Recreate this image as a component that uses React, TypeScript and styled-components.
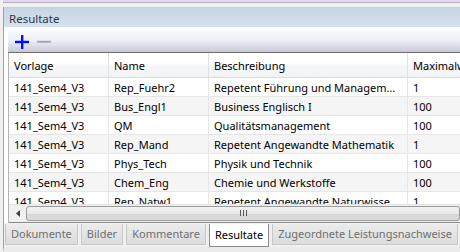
import styled, { createGlobalStyle } from "styled-components";

const GlobalStyle = createGlobalStyle`
  html, body {
    margin: 0;
    padding: 0;
    width: 460px;
    height: 252px;
    overflow: hidden;
    background: #f0f0f0;
    font-family: "Noto Sans", "Open Sans", sans-serif;
    font-size: 11px;
    color: #000;
  }
`;

const columns = [
  { title: "Vorlage", width: 100 },
  { title: "Name", width: 100 },
  { title: "Beschreibung", width: 199 },
  { title: "Maximalwert", width: 80 },
];

const rows = [
  ["141_Sem4_V3", "Rep_Fuehr2", "Repetent Führung und Management", "1"],
  ["141_Sem4_V3", "Bus_Engl1", "Business Englisch I", "100"],
  ["141_Sem4_V3", "QM", "Qualitätsmanagement", "100"],
  ["141_Sem4_V3", "Rep_Mand", "Repetent Angewandte Mathematik", "1"],
  ["141_Sem4_V3", "Phys_Tech", "Physik und Technik", "100"],
  ["141_Sem4_V3", "Chem_Eng", "Chemie und Werkstoffe", "100"],
  ["141_Sem4_V3", "Rep_Natw1", "Repetent Angewandte Naturwissenschaften", "1"],
];

const tabs = [
  "Dokumente",
  "Bilder",
  "Kommentare",
  "Resultate",
  "Zugeordnete Leistungsnachweise",
];

export default function App() {
  return (
    <>
      <GlobalStyle />
      <Page>
        <TopStrip />
        <Panel>
          <PanelHeader>Resultate</PanelHeader>
          <PanelBody>
            <Toolbar>
              <ToolButton $color="#0010f0" title="Hinzufügen">
                <svg width="16" height="16" viewBox="0 0 16 16">
                  <rect x="7" y="1" width="2.4" height="14" fill="currentColor" />
                  <rect x="1" y="6.8" width="14" height="2.4" fill="currentColor" />
                </svg>
              </ToolButton>
              <ToolButton $color="#a8a8a8" title="Entfernen">
                <svg width="16" height="16" viewBox="0 0 16 16">
                  <rect x="1" y="6.8" width="14" height="2" fill="currentColor" />
                </svg>
              </ToolButton>
            </Toolbar>
            <Grid>
              <HeaderRow>
                {columns.map((c) => (
                  <HeaderCell key={c.title} $width={c.width}>
                    {c.title}
                  </HeaderCell>
                ))}
              </HeaderRow>
              <Rows>
                {rows.map((r, i) => (
                  <Row key={i} $alt={i % 2 === 1}>
                    {r.map((v, j) => (
                      <Cell key={j} $width={columns[j].width}>
                        {v}
                      </Cell>
                    ))}
                  </Row>
                ))}
              </Rows>
              <HScroll>
                <ArrowBtn>
                  <svg width="4" height="7" viewBox="0 0 4 7">
                    <path d="M4 0 L0 3.5 L4 7 Z" fill="#404040" />
                  </svg>
                </ArrowBtn>
                <Track>
                  <Thumb>
                    <Grip />
                  </Thumb>
                </Track>
              </HScroll>
            </Grid>
          </PanelBody>
        </Panel>
        <TabBar>
          {tabs.map((t) => (
            <Tab key={t} $active={t === "Resultate"}>
              {t}
            </Tab>
          ))}
        </TabBar>
      </Page>
    </>
  );
}

const Page = styled.div`
  width: 460px;
  height: 252px;
  display: flex;
  flex-direction: column;
  overflow: hidden;
`;

const TopStrip = styled.div`
  height: 2px;
  background: #e4d8ee;
  border-bottom: 1px solid #b8b0c4;
  margin-left: 3px;
  margin-bottom: 4px;
`;

const Panel = styled.div`
  margin-left: 3px;
  border-left: 1px solid #a0a0a0;
  display: flex;
  flex-direction: column;
  height: 216px;
`;

const PanelHeader = styled.div`
  height: 20px;
  box-sizing: border-box;
  padding: 3px 0 0 5px;
  line-height: 17px;
  font-size: 11.5px;
  color: #30373f;
  background: linear-gradient(#c6d4e2, #d6e2ee);
`;

const PanelBody = styled.div`
  flex: 1;
  background: #ffffff;
  padding: 3px 0 0 4px;
  display: flex;
  flex-direction: column;
  min-height: 0;
`;

const Toolbar = styled.div`
  height: 23px;
  display: flex;
  align-items: center;
  gap: 6px;
  padding: 2px 0 0 6px;
  box-sizing: border-box;
  background: linear-gradient(#fafbfe 0%, #eef0f8 45%, #c9c9d6 100%);
  border-bottom: 1px solid #6e6e6e;
`;

const ToolButton = styled.span<{ $color: string }>`
  width: 16px;
  height: 16px;
  display: flex;
  color: ${(p) => p.$color};
`;

const Grid = styled.div`
  flex: 1;
  display: flex;
  flex-direction: column;
  border-left: 1px solid #b4b4b4;
  min-height: 0;
  overflow: hidden;
`;

const HeaderRow = styled.div`
  display: flex;
  height: 24px;
  flex-shrink: 0;
  background: linear-gradient(#ffffff 0%, #ffffff 45%, #f6f7f9 50%, #f2f3f5 100%);
  border-bottom: 1px solid #dcdcdc;
`;

const HeaderCell = styled.div<{ $width: number }>`
  flex: 0 0 ${(p) => p.$width}px;
  padding: 3px 0 0 5px;
  line-height: 20px;
  white-space: nowrap;
  overflow: hidden;
  border-right: 1px solid #e0e2e6;
  box-sizing: border-box;
`;

const Rows = styled.div`
  flex: 1;
  overflow: hidden;
  min-height: 0;
`;

const Row = styled.div<{ $alt: boolean }>`
  display: flex;
  height: 19px;
  background: ${(p) => (p.$alt ? "#f5f5f5" : "#ffffff")};
  border-bottom: 1px solid #e6e6e6;
  box-sizing: border-box;
`;

const Cell = styled.div<{ $width: number }>`
  flex: 0 0 ${(p) => p.$width}px;
  padding: 1px 6px 0 5px;
  line-height: 18px;
  white-space: nowrap;
  overflow: hidden;
  text-overflow: ellipsis;
  border-right: 1px solid #e6e6e6;
  box-sizing: border-box;
`;

const HScroll = styled.div`
  height: 17px;
  flex-shrink: 0;
  display: flex;
  background: #f0f0f0;
  border-top: 1px solid #e4e4e4;
  border-bottom: 1px solid #8a8a8a;
`;

const ArrowBtn = styled.div`
  width: 17px;
  display: flex;
  align-items: center;
  justify-content: center;
`;

const Track = styled.div`
  flex: 1;
  display: flex;
  padding: 1px 0;
`;

const Thumb = styled.div`
  flex: 1;
  border: 1px solid #9a9a9a;
  border-radius: 3px;
  background: linear-gradient(#f3f3f3 0%, #e8e8e8 50%, #d6d6d6 51%, #dcdcdc 100%);
  display: flex;
  align-items: center;
  justify-content: center;
`;

const Grip = styled.div`
  width: 7px;
  height: 6px;
  background: repeating-linear-gradient(
    90deg,
    #5a5a5a 0px,
    #5a5a5a 1px,
    transparent 1px,
    transparent 3px
  );
`;

const TabBar = styled.div`
  display: flex;
  align-items: flex-end;
  gap: 3px;
  height: 25px;
  border-left: 1px solid #a0a0a0;
  margin-left: 3px;
  padding-left: 1px;
  background: #f0f0f0;
  border-bottom: 5px solid #ebebeb;
  box-sizing: content-box;
`;

const Tab = styled.div<{ $active: boolean }>`
  height: ${(p) => (p.$active ? 23 : 21)}px;
  line-height: ${(p) => (p.$active ? 22 : 20)}px;
  padding: 0 5px;
  flex-shrink: 0;
  box-sizing: border-box;
  color: ${(p) => (p.$active ? "#000" : "#707070")};
  white-space: nowrap;
  background: ${(p) =>
    p.$active ? "#ffffff" : "linear-gradient(#ececec, #dcdcdc)"};
  border: 1px solid ${(p) => (p.$active ? "#8c8c8c" : "#c8c8c8")};
  border-top: none;
  margin-bottom: ${(p) => (p.$active ? 0 : 2)}px;
`;
